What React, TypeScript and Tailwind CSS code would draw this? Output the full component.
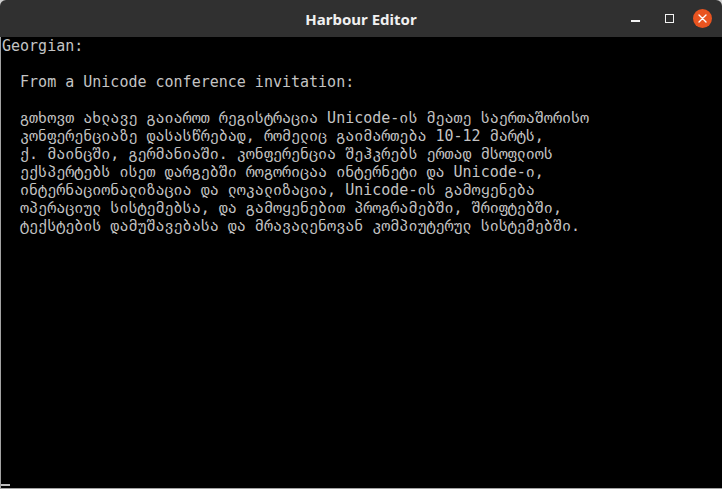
const lines = [
  "Georgian:",
  "",
  "  From a Unicode conference invitation:",
  "",
  "  გთხოვთ ახლავე გაიაროთ რეგისტრაცია Unicode-ის მეათე საერთაშორისო",
  "  კონფერენციაზე დასასწრებად, რომელიც გაიმართება 10-12 მარტს,",
  "  ქ. მაინცში, გერმანიაში. კონფერენცია შეჰკრებს ერთად მსოფლიოს",
  "  ექსპერტებს ისეთ დარგებში როგორიცაა ინტერნეტი და Unicode-ი,",
  "  ინტერნაციონალიზაცია და ლოკალიზაცია, Unicode-ის გამოყენება",
  "  ოპერაციულ სისტემებსა, და გამოყენებით პროგრამებში, შრიფტებში,",
  "  ტექსტების დამუშავებასა და მრავალენოვან კომპიუტერულ სისტემებში.",
];

const App = () => {
  return (
    <div className="w-[722px] h-[489px] flex flex-col bg-[#cfcfcf] overflow-hidden">
      {/* Title bar */}
      <header className="h-[37px] shrink-0 grid grid-cols-[1fr_auto_1fr] items-center rounded-t-[6px] bg-[#303030]">
        <div />
        <div className="text-[15px] font-bold text-[#f0f0f0] font-['Noto_Sans',sans-serif] pt-[1px]">
          Harbour Editor
        </div>
        <div className="flex items-center justify-end">
          <div className="w-[9px] h-[2px] bg-[#f2f2f2] mt-[5px]" />
          <div className="ml-[25px] w-[9px] h-[9px] border border-[#f2f2f2]" />
          <div className="ml-[19px] mr-[10px] w-[19px] h-[19px] rounded-full bg-[#e95420] flex items-center justify-center">
            <svg width="9" height="9" viewBox="0 0 9 9">
              <path d="M1 1L8 8M8 1L1 8" stroke="#ffffff" strokeWidth="1.4" strokeLinecap="round" />
            </svg>
          </div>
        </div>
      </header>

      {/* Terminal area */}
      <main className="flex-1 flex flex-col bg-black border-l border-b border-[#a3a3a3]">
        <pre className="pl-[1px] font-['DejaVu_Sans_Mono',monospace] text-[15px] leading-[18px] text-[#c4c4c4] whitespace-pre">
          {lines.join("\n")}
        </pre>
        <div className="mt-auto mb-[2px] w-[9px] h-[2px] bg-[#bdbdbd]" />
      </main>
    </div>
  );
};

export default App;
